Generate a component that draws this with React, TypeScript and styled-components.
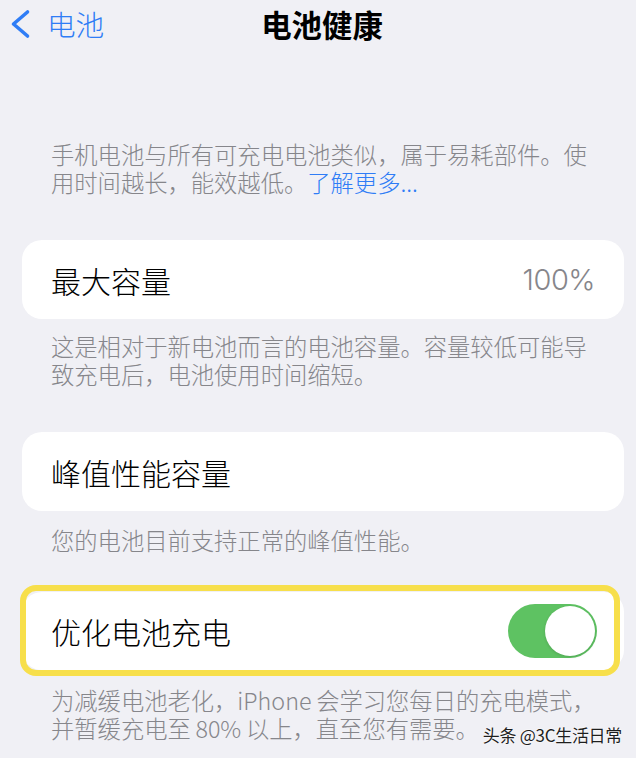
import React from "react";
import styled, { createGlobalStyle } from "styled-components";

const GlobalStyle = createGlobalStyle`
  html, body {
    margin: 0;
    padding: 0;
    background: #f0f0f5;
  }
  body {
    font-family: "Noto Sans CJK SC", "Noto Sans", sans-serif;
    -webkit-font-smoothing: antialiased;
  }
`;

const Screen = styled.div`
  position: relative;
  width: 636px;
  height: 758px;
  overflow: hidden;
  background: #f0f0f5;
  box-sizing: border-box;
  padding: 0 12px 0 22px;
`;

const NavBar = styled.header`
  display: grid;
  grid-template-columns: 1fr auto 1fr;
  align-items: center;
  height: 48px;
  margin-left: -22px;
  margin-right: -12px;
`;

const BackLink = styled.a`
  display: flex;
  align-items: center;
  gap: 16px;
  padding-left: 9px;
  color: #2f7df6;
  font-size: 28.6px;
  font-weight: 300;
  line-height: 1;
  text-decoration: none;
`;

const Title = styled.h1`
  margin: 0 0 0 8px;
  font-size: 30.4px;
  font-weight: 700;
  color: #000;
  line-height: 1;
`;

const Group = styled.section<{ $top: number }>`
  display: flex;
  flex-direction: column;
  margin-top: ${(p) => p.$top}px;
`;

const Note = styled.p<{ $top?: number }>`
  margin: ${(p) => p.$top ?? 0}px 0 0;
  padding: 0 22px 0 29px;
  font-size: 23.3px;
  font-weight: 300;
  line-height: 28px;
  color: #86868b;
`;

const Link = styled.a`
  color: #2f7df6;
  text-decoration: none;
`;

const Card = styled.div<{ $height?: number }>`
  position: relative;
  display: flex;
  align-items: center;
  justify-content: space-between;
  height: ${(p) => p.$height ?? 79}px;
  padding: 0 27px 0 29px;
  background: #fff;
  border-radius: 20px;
`;

const Label = styled.span`
  font-size: 30px;
  font-weight: 300;
  color: #000;
  line-height: 1;
`;

const Value = styled.span`
  font-family: "Inter", "Noto Sans", sans-serif;
  font-size: 29px;
  font-weight: 300;
  color: #86868b;
  letter-spacing: -0.5px;
  margin-right: 2px;
`;

/* Yellow callout frame painted over the charging card */
const Callout = styled.div`
  position: absolute;
  left: -2px;
  right: 4px;
  top: -7px;
  bottom: -6px;
  border: 6px solid #f7df4b;
  border-radius: 16px;
  pointer-events: none;
`;

const Switch = styled.div<{ $on: boolean }>`
  position: relative;
  width: 89px;
  height: 54px;
  border-radius: 27px;
  background: ${(p) => (p.$on ? "#5ec262" : "#e5e5ea")};
  display: flex;
  align-items: center;
  justify-content: ${(p) => (p.$on ? "flex-end" : "flex-start")};
  padding: 0 2px;
  box-sizing: border-box;
`;

const Knob = styled.span`
  width: 50px;
  height: 50px;
  border-radius: 50%;
  background: #fff;
  box-shadow: 0 1px 3px rgba(0, 0, 0, 0.15);
`;

const Watermark = styled.span`
  position: absolute;
  right: 14px;
  top: 723px;
  font-size: 17px;
  line-height: 24px;
  color: #1e1e1e;
  letter-spacing: -0.3px;
  text-shadow: 0 0 2px #fff, 0 0 2px #fff;
`;

const Chevron = () => (
  <svg width="22" height="30" viewBox="0 0 22 30" aria-hidden>
    <path
      d="M18.5 3 L4.5 15 L18.5 27"
      fill="none"
      stroke="#2f7df6"
      strokeWidth="3.6"
      strokeLinecap="round"
      strokeLinejoin="round"
    />
  </svg>
);

// thin spaces between Han characters and Latin runs, as iOS sets them
const chargingNote =
  "为减缓电池老化，iPhone\u2009会学习您每日的充电模式，并暂缓充电至\u200980%\u2009以上，直至您有需要。";

export default function App() {
  return (
    <>
      <GlobalStyle />
      <Screen>
        <NavBar>
          <BackLink href="#">
            <Chevron />
            电池
          </BackLink>
          <Title>电池健康</Title>
          <span />
        </NavBar>

        <Note $top={92}>
          手机电池与所有可充电电池类似，属于易耗部件。使用时间越长，能效越低。
          <Link href="#">了解更多...</Link>
        </Note>

        <Group $top={44}>
          <Card>
            <Label>最大容量</Label>
            <Value>100%</Value>
          </Card>
          <Note $top={13}>
            这是相对于新电池而言的电池容量。容量较低可能导致充电后，电池使用时间缩短。
          </Note>
        </Group>

        <Group $top={44}>
          <Card>
            <Label>峰值性能容量</Label>
          </Card>
          <Note $top={15}>您的电池目前支持正常的峰值性能。</Note>
        </Group>

        <Group $top={38}>
          <Card $height={78}>
            <Label>优化电池充电</Label>
            <Switch $on>
              <Knob />
            </Switch>
            <Callout />
          </Card>
          <Note $top={16}>{chargingNote}</Note>
        </Group>

        <Watermark>头条 @3C生活日常</Watermark>
      </Screen>
    </>
  );
}
